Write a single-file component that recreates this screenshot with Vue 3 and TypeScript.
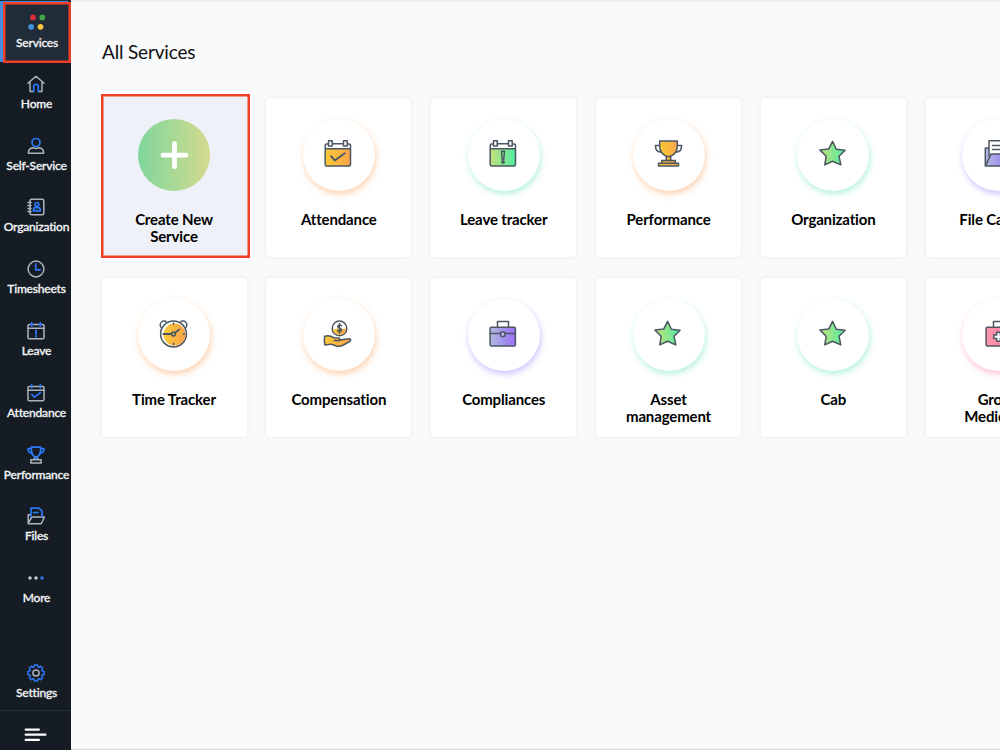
<script setup lang="ts">
interface NavItem { label: string; icon: string }
interface Service { label: string; icon: string; tone: string }

const nav: NavItem[] = [
  { label: 'Services', icon: 'services' },
  { label: 'Home', icon: 'home' },
  { label: 'Self-Service', icon: 'person' },
  { label: 'Organization', icon: 'book' },
  { label: 'Timesheets', icon: 'clock' },
  { label: 'Leave', icon: 'leave' },
  { label: 'Attendance', icon: 'attendance' },
  { label: 'Performance', icon: 'trophy' },
  { label: 'Files', icon: 'files' },
  { label: 'More', icon: 'more' },
]

const services: Service[] = [
  { label: 'Create New Service', icon: 'plus', tone: 'create' },
  { label: 'Attendance', icon: 'check', tone: 'orange' },
  { label: 'Leave tracker', icon: 'leave', tone: 'green' },
  { label: 'Performance', icon: 'trophy', tone: 'orange' },
  { label: 'Organization', icon: 'star', tone: 'green' },
  { label: 'File Cabinet', icon: 'folder', tone: 'purple' },
  { label: 'Time Tracker', icon: 'alarm', tone: 'orange' },
  { label: 'Compensation', icon: 'hand', tone: 'orange' },
  { label: 'Compliances', icon: 'briefcase', tone: 'purple' },
  { label: 'Asset management', icon: 'star', tone: 'green' },
  { label: 'Cab', icon: 'star', tone: 'green' },
  { label: 'Group Mediclaim', icon: 'medkit', tone: 'pink' },
]
</script>

<template>
  <div class="app">
    <svg class="defs" width="0" height="0">
      <defs>
        <linearGradient id="g-orange"><stop offset="0" stop-color="#fbcb35" /><stop offset="1" stop-color="#fba34c" /></linearGradient>
        <linearGradient id="g-green"><stop offset="0" stop-color="#c5e07c" /><stop offset="1" stop-color="#50eda2" /></linearGradient>
        <linearGradient id="g-purple"><stop offset="0" stop-color="#b0b9e0" /><stop offset="1" stop-color="#9a72f8" /></linearGradient>
        <linearGradient id="g-pink"><stop offset="0" stop-color="#fb94ab" /><stop offset="1" stop-color="#fc7fa8" /></linearGradient>
      </defs>
    </svg>

    <aside class="sidebar">
      <nav>
        <a v-for="item in nav" :key="item.label" class="item" :class="{ active: item.icon === 'services' }">
          <svg class="nav-icon" width="18" height="18" viewBox="0 0 18 18">
            <g v-if="item.icon === 'services'">
              <circle cx="5" cy="4.4" r="2.900" fill="#d9303a" /><circle cx="14.300" cy="4.4" r="2.900" fill="#43a447" />
              <circle cx="3.200" cy="13.8" r="2.900" fill="#4390dc" /><circle cx="12.500" cy="13.8" r="2.900" fill="#fac63c" />
            </g>
            <g v-else-if="item.icon === 'home'">
              <path class="w" d="M.9 8.2 9 1.2l8.1 7M3 7v9.4h3.4M15 7v9.4h-3.4" />
              <path class="b" d="M6.7 16.6v-5a2.3 2.3 0 0 1 4.6 0v5" />
            </g>
            <g v-else-if="item.icon === 'person'">
              <path class="w" d="M1.4 16.2h15.2c0-3.5-2.1-5.2-4.6-5.4L9 11.5l-3-.7c-2.5.2-4.6 1.900-4.600 5.400z" />
              <circle class="b" cx="9" cy="5.5" r="4" />
            </g>
            <g v-else-if="item.icon === 'book'">
              <rect class="w" x="3" y="1.200" width="13.800" height="15.600" rx="1.500" />
              <path class="w" d="M1 4.500h3M1 7.500h3M1 10.500h3M1 13.500h3" />
              <circle class="b" cx="9.900" cy="6.400" r="1.900" /><path class="b" d="M6.300 12.800h7.200c0-2.300-1.200-3.300-2.400-3.500l-1.200.5-1.200-.5c-1.200.2-2.400 1.200-2.400 3.500z" />
            </g>
            <g v-else-if="item.icon === 'clock'">
              <circle class="w" cx="9" cy="9" r="7.900" /><path class="b" d="M8.700 3.800v6h4.500" />
            </g>
            <g v-else-if="item.icon === 'leave'">
              <rect class="w" x="1" y="2.600" width="16" height="14.200" rx="1.300" /><path class="w" d="M1 6.300h16" />
              <path class="b" d="M4.700.8v3M13.300.8v3M3.500 2.600h2.400M12.100 2.600h2.400M9 8.300v4M9 13.800v1" />
            </g>
            <g v-else-if="item.icon === 'attendance'">
              <rect class="w" x="1" y="2.600" width="16" height="14.200" rx="1.300" /><path class="w" d="M1 6.300h16" />
              <path class="b" d="M4.700.8v3M13.300.8v3M4.800 10.300l2.700 2.900 5.800-4.600" />
            </g>
            <g v-else-if="item.icon === 'trophy'">
              <path class="w" d="M3.800 13.700h10.400v3.200H3.800zM6.500 13.700c1.200-.8 1.500-1.800 2.500-3.200 1 1.400 1.300 2.400 2.500 3.200" />
              <path class="b" d="M4.400 1.100h9.200v3.400c0 3.500-2 6-4.600 7.200-2.600-1.200-4.600-3.700-4.600-7.200zM4.400 2.700H1c0 3 1.500 4.500 4.500 4.600M13.600 2.700H17c0 3-1.500 4.500-4.500 4.600M9 11.300v1.600" />
            </g>
            <g v-else-if="item.icon === 'files'">
              <path class="w" d="M1.200 16.500V7.800h2.300M1.200 16.700l3.500-6.600h12.600l-3 6.600zM15.200 7.800v2" />
              <path class="b" d="M4 9.500V1.200h8l3 3v5.300M6.500 5.500h4.500" />
            </g>
            <g v-else>
              <circle cx="3" cy="9" r="1.700" fill="#ccd0d5" /><circle cx="9" cy="9" r="1.700" fill="#ccd0d5" /><circle cx="15" cy="9" r="1.700" fill="#2c78f6" />
            </g>
          </svg>
          <span>{{ item.label }}</span>
        </a>
      </nav>
      <a class="item settings">
        <svg class="nav-icon" width="18" height="18" viewBox="0 0 18 18">
          <path class="b" d="m7.300 1h3.400l.4 2.100 1.300.6 1.800-1.200 2.300 2.300-1.200 1.800.6 1.300 2.100.4v3.400l-2.100.4-.6 1.300 1.200 1.800-2.300 2.300-1.800-1.200-1.300.6-.4 2.100H7.300l-.4-2.100-1.300-.6-1.800 1.200-2.300-2.300 1.200-1.800-.6-1.300L0 11.700V8.300l2.100-.4.6-1.300-1.200-1.800 2.300-2.300 1.800 1.200 1.300-.6z" transform="translate(.9 0) scale(.9)" />
          <circle class="w" cx="9" cy="9" r="3.100" />
        </svg>
        <span>Settings</span>
      </a>
      <div class="collapse">
        <svg width="23" height="14" viewBox="0 0 23 14"><path d="M1.700 1.600h13.200M1.700 6.700h19.700M1.700 11.900h13.200" fill="none" stroke="#fff" stroke-width="2.200" stroke-linecap="round" /></svg>
      </div>
    </aside>

    <main>
      <h1>All Services</h1>
      <section class="grid">
        <article v-for="s in services" :key="s.label" class="card" :class="s.tone">
          <div class="disc">
            <svg class="svc-icon" width="30" height="30" viewBox="0 0 30 30">
              <path v-if="s.icon === 'plus'" d="M15.500 3.700v23M4 15.200h23" fill="none" stroke="#fff" stroke-width="4.800" stroke-linecap="round" />
              <g v-else-if="s.icon === 'check' || s.icon === 'leave'">
                <path :fill="s.icon === 'check' ? 'url(#g-orange)' : 'url(#g-green)'" d="M2.200 9.800h25.300v15.700a1.500 1.500 0 0 1-1.500 1.500H3.700a1.500 1.500 0 0 1-1.500-1.500z" />
                <path class="k" d="M5.200 5H3.700a1.500 1.500 0 0 0-1.500 1.500v19A1.500 1.500 0 0 0 3.700 27H26a1.500 1.500 0 0 0 1.500-1.500v-19A1.500 1.500 0 0 0 26 5h-1.500M9.300 4.700h11.200M2.200 9.800h25.300" />
                <path class="k" fill="#fff" d="M5.500 1.800h3.700v5.300H5.500zM20.500 1.800h3.700v5.300h-3.700z" />
                <path v-if="s.icon === 'check'" class="k thick" d="m8 17.200 3.800 4.200 10-7.200" />
                <g v-else><path class="k" d="M13.500 12.300h3l-.7 8h-1.600z" /><circle class="k" cx="15" cy="22.900" r="1.200" /></g>
              </g>
              <g v-else-if="s.icon === 'trophy'" class="k">
                <path d="M6.700 6.400H2.400c0 4.300 2 6.700 5.800 6.700M24.300 6.400h4.300c0 4.300-2 6.700-5.800 6.700" />
                <path fill="url(#g-orange)" d="M6.700 2h17.600v5c0 5.600-2.400 8.300-6.600 10.200v4.300h4.600v2.700h3.200v2.900H5.500v-2.900h3.200v-2.700h4.600v-4.300C9.100 15.300 6.700 12.600 6.700 7z" />
                <path d="M8.700 24.200h13.600M13.300 17.600h4.400M13.300 21.500h4.400" />
              </g>
              <path v-else-if="s.icon === 'star'" class="k" fill="url(#g-green)" d="m14.600 2.300 3.700 8 8.800.9-6.100 6 1.800 8.700-8.200-3.700-7.800 3.700 1.400-8.700-6.200-6.100 8.700-1z" />
              <g v-else-if="s.icon === 'folder'" class="k">
                <path fill="#b0b9e0" d="M2.300 9h5v14l-5 3.800z" />
                <path fill="#fff" d="M6 17V1.800h20V17" />
                <path d="M9.500 6.500h12M9.500 10.500h12" />
                <path fill="url(#g-purple)" d="M8 15h21l-5 12H2.500z" />
              </g>
              <g v-else-if="s.icon === 'alarm'" class="k" transform="translate(-1 0)">
                <circle cx="6" cy="5.900" r="3.800" fill="#fff" /><circle cx="25" cy="5.900" r="3.800" fill="#fff" />
                <circle cx="15.500" cy="15" r="12.900" fill="#fff" /><circle cx="16.500" cy="15.500" r="10.900" fill="url(#g-orange)" stroke="none" />
                <path d="M5.300 15h8.200M17.300 13.800l4-3.400" class="thick" /><circle cx="15.500" cy="15" r="1.900" />
                <path d="M15.500 4v1.200M15.500 24.300v1.500M26.500 15h-1.200" />
              </g>
              <g v-else-if="s.icon === 'hand'" class="k" transform="translate(-.8 0)">
                <circle cx="17.300" cy="9.400" r="7.300" fill="#fff" />
                <path fill="url(#g-orange)" stroke="none" d="M10.600 9.200c3 2.700 5-.8 7.500 0s3.500 1.300 5.900 0a6.700 6.700 0 0 1-13.400 0z" />
                <path d="M19.200 6.800c-1.100-1.100-3.700-.9-3.700.8 0 2.200 3.900 1.100 3.900 3.400 0 1.900-3 1.900-4.200.6M17.300 4.600v9.600" />
                <path fill="url(#g-orange)" d="M2.500 17.200c3.400-1 6-.8 9 1.500l4.600.2c1.800.1 2 2.300.2 2.500l4.800-.8 6-.8c1.700 0 1.900 1.700.5 2.600l-6.300 3.600c-2.300 1.200-4.500 1.800-7 1-3-1-5-2.600-8-1.500l-3.500.5c-.8-2.800-.8-6-.3-8.800zM12 21.600l4.500.1" />
              </g>
              <g v-else-if="s.icon === 'briefcase'" class="k">
                <path fill="#fff" d="M9.500 8.300V2.600h11v5.700" />
                <rect x="2.100" y="8.300" width="25.300" height="18.700" rx="1.200" fill="url(#g-purple)" />
                <path d="M2.100 14.500h10.600M16.900 14.500h10.500" /><rect x="12.700" y="13" width="4.200" height="4.500" rx="1" fill="#c1b9ef" />
              </g>
              <g v-else class="k">
                <path fill="#fff" d="M10.500 8.300V2.600h9v5.700" />
                <rect x="3.100" y="8.300" width="25" height="18.700" rx="1.200" fill="url(#g-pink)" />
                <path fill="#fff" d="M13.700 13.200h3.600v2.700h2.900v3.600h-2.900v2.700h-3.600v-2.700h-2.900v-3.600h2.900z" />
              </g>
            </svg>
          </div>
          <h2>{{ s.label }}</h2>
        </article>
      </section>
    </main>
  </div>
</template>

<style>
body { margin: 0; overflow: hidden; }
</style>

<style scoped>
.app {
  display: flex;
  width: 1000px;
  height: 750px;
  overflow: hidden;
  background: #f9fafc;
  font-family: Lato, sans-serif;
}
.defs { position: absolute; }
.sidebar {
  display: flex;
  flex-direction: column;
  flex: none;
  width: 71px;
  background: #151c24;
  color: #f3f4f6;
}
nav { flex: 1; padding-top: 2px; }
.item {
  box-sizing: border-box;
  display: flex;
  flex-direction: column;
  align-items: center;
  height: 61.8px;
  padding: 12.800px 0 0 2px;
  font-size: 12px;
  line-height: 16px;
  font-weight: 500;
  letter-spacing: -.2px;
  white-space: nowrap;
  -webkit-text-stroke: .3px currentColor;
}
.item span { margin-top: 3px; }
.item.active {
  width: 68px;
  height: 61px;
  margin: 0 0 -1px 3px;
  padding: 11px 0 0;
  background: #202c37;
  box-shadow: inset 0 0 0 2.500px #ef4027, -3px -1px #448bdd, 0 -2px #202c37;
}
.item.active span { margin-top: 4px; }
.nav-icon { display: block; flex: none; margin-right: .500px; }
.w, .b { fill: none; stroke-width: 1.500; stroke-linecap: round; stroke-linejoin: round; }
.w { stroke: #aeb4bd; }
.b { stroke: #2c78f6; stroke-width: 1.700; }
.settings { flex: none; height: 46px; padding-top: 0; }
.collapse {
  box-sizing: border-box;
  flex: none;
  height: 40px;
  padding: 17px 0 0 24px;
  border-top: 1px solid #232f3d;
}
.collapse svg { display: block; }
main {
  flex: 1;
  min-width: 0;
  padding: 40px 0 0 30.500px;
  overflow: hidden;
  box-shadow: inset 0 3px 2px -2px #e3e5e8, inset 0 -3px 2px -2px #d9dadc;
}
h1 { margin: 0 0 0 .5px; font-size: 19px; line-height: 24px; font-weight: 400; letter-spacing: -.17px; color: #111; }
.grid {
  display: grid;
  grid-template-columns: repeat(6, 145px);
  grid-auto-rows: 159px;
  gap: 21.300px 19.850px;
  padding-top: 33.500px;
}
.card {
  box-sizing: border-box;
  display: flex;
  flex-direction: column;
  align-items: center;
  padding-top: 21px;
  border-radius: 4px;
  background: #fff;
  box-shadow: 0 0 4px rgba(40, 50, 70, .09);
}
.disc {
  display: flex;
  align-items: center;
  justify-content: center;
  width: 72px;
  height: 72px;
  border-radius: 50%;
  background: #fff;
}
.svc-icon { display: block; margin: -1px 1px 0 0; }
.k { stroke: #4b5663; stroke-width: 1.500; stroke-linejoin: round; stroke-linecap: round; }
.k:not([fill]) { fill: none; }
.thick { stroke-width: 1.900; }
.orange .disc { box-shadow: 1px 3px 6px rgba(253, 162, 91, .5); }
.green .disc { box-shadow: 1px 3px 6px rgba(91, 225, 170, .45); }
.purple .disc { box-shadow: 1px 3px 6px rgba(145, 115, 250, .45); }
.pink .disc { box-shadow: 1px 3px 6px rgba(253, 120, 155, .45); }
.create {
  margin: -4px -3.500px -1.500px -1px;
  padding: 25px 2.500px 0 0;
  background: #eef1f7;
  border-radius: 0;
  box-shadow: inset 0 0 0 2.500px #f04026;
}
.create .disc { background: linear-gradient(90deg, #7fd79c, #d4da8d); }
.create .svc-icon { margin: 0; }
h2 {
  width: 112px;
  margin: 20px 0 0;
  color: #000;
  font-size: 15px;
  line-height: 17.600px;
  font-weight: 700;
  letter-spacing: -.15px;
  text-align: center;
}
</style>
